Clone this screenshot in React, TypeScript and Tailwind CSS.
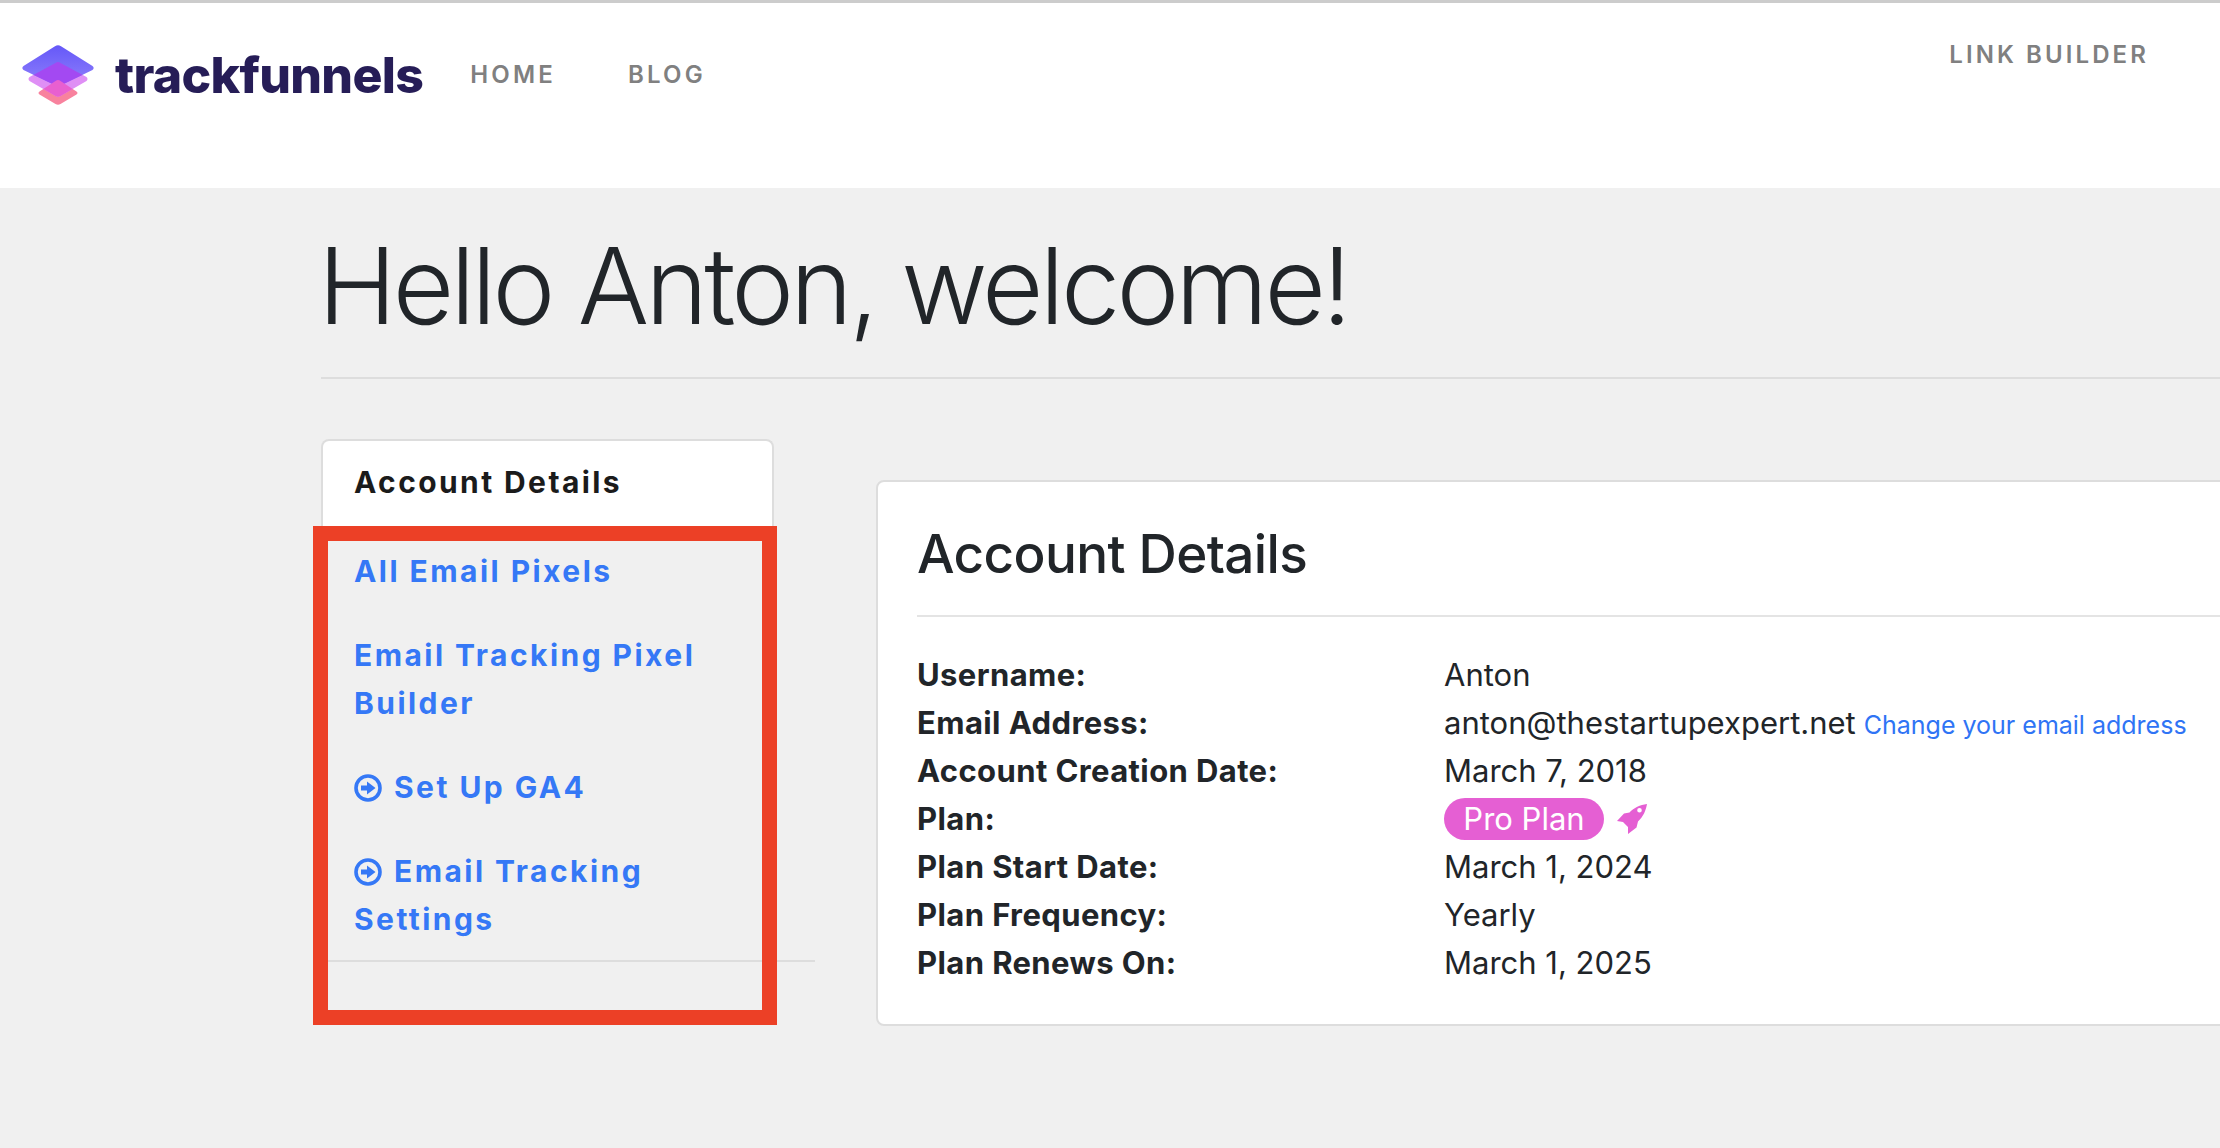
const ROWS: [string, string][] = [
  ['Username:', 'Anton'],
  ['Email Address:', 'anton@thestartupexpert.net'],
  ['Account Creation Date:', 'March 7, 2018'],
  ['Plan:', ''],
  ['Plan Start Date:', 'March 1, 2024'],
  ['Plan Frequency:', 'Yearly'],
  ['Plan Renews On:', 'March 1, 2025'],
]

const TOP = 'M33 1.200 Q36 -0.600 39 1.200 L70.500 21 Q72.800 23 70.500 25 L39 40.300 Q36 41.800 33 40.300 L1.500 25 Q-0.800 23 1.500 21Z'
const MID = 'M33.500 18 Q36 16 38.500 18 L64.500 32 Q66.500 34 64.500 36 L38.500 51 Q36 52.500 33.500 51 L7.500 36 Q5.500 34 7.500 32Z'
const LOW = 'M33.500 36 Q36 34 38.500 36 L54.500 46.500 Q56.500 48 54.500 49.500 L38.500 59 Q36 60.500 33.500 59 L17.500 49.500 Q15.500 48 17.500 46.500Z'

function Logo() {
  return (
    <svg width="72" height="60" viewBox="0 0 72 60" className="shrink-0">
      <defs>
        <linearGradient id="top" x1="0" y1="0" x2="0" y2="1">
          <stop offset="0" stopColor="#6558f8" />
          <stop offset="1" stopColor="#8f80fb" />
        </linearGradient>
        <clipPath id="top-clip">
          <path d={TOP} />
        </clipPath>
        <clipPath id="mid-clip">
          <path d={MID} />
        </clipPath>
      </defs>
      <path d={LOW} fill="#f8829e" />
      <path d={MID} fill="#df8ff5" />
      <path d={TOP} fill="url(#top)" />
      <path d={MID} fill="#a349f2" clipPath="url(#top-clip)" />
      <path d={LOW} fill="#e85fd0" clipPath="url(#mid-clip)" />
    </svg>
  )
}

function ArrowCircle() {
  return (
    <svg viewBox="0 0 28 28" className="inline-block w-[28px] h-[28px] mr-[12px] align-[-4px]">
      <circle cx="14" cy="14" r="12" fill="none" stroke="currentColor" strokeWidth="3.600" />
      <path d="M7 11.500 H13 V7.500 L21.500 14 L13 20.500 V16.500 H7Z" fill="currentColor" />
    </svg>
  )
}

function Rocket() {
  return (
    <svg viewBox="0 0 30 30" className="w-[30px] h-[30px] text-[#e55fd3]">
      <path
        fillRule="evenodd"
        fill="currentColor"
        d="M30 0 C23 1 17 3.500 12.500 8.500 L7 9.500 L0 17 L6 18 L11 23 L11 30 L19.500 23.500 L21 17.500 C26.500 12.500 29 6 30 0Z M22.500 4 A2.300 2.300 0 1 0 22.500 8.600 A2.300 2.300 0 1 0 22.500 4Z"
      />
    </svg>
  )
}

function SideLink({ text, icon }: { text: string; icon?: boolean }) {
  return (
    <a className="block text-[30px] leading-[48px] font-bold tracking-[2.45px] text-[#3578f6]">
      {icon && <ArrowCircle />}
      {text}
    </a>
  )
}

export default function App() {
  return (
    <div className="w-[2220px] h-[1148px] overflow-hidden bg-[#f0f0f0] text-[#212529] font-['Inter',sans-serif]">
      {/* top nav */}
      <header className="h-[188px] bg-white border-t-[3px] border-[#cccccc] flex items-start">
        <div className="flex items-center pl-[22px] pt-[42px]">
          <Logo />
          <span className="ml-[21px] text-[50px] leading-[60px] font-extrabold tracking-[-0.7px] text-[#261d57]">
            trackfunnels
          </span>
        </div>
        <nav className="flex gap-[72px] ml-[47px] mt-[56px] text-[24px] leading-[32px] font-semibold tracking-[3.2px] text-[#808080]">
          <a>HOME</a>
          <a>BLOG</a>
        </nav>
        <a className="ml-auto mr-[71px] mt-[36px] text-[24px] leading-[32px] font-semibold tracking-[3.1px] text-[#808080]">
          LINK BUILDER
        </a>
      </header>

      <main className="pl-[321px]">
        <h1 className="h-[191px] pt-[33px] -indent-[3px] text-[106px] leading-[130px] font-light tracking-[-3.7px] border-b-2 border-[#dddddd]">
          Hello Anton, welcome!
        </h1>

        <div className="flex items-start pt-[60px]">
          {/* sidebar */}
          <aside className="relative w-[494px] shrink-0">
            <div className="w-[453px] h-[87px] bg-white border-2 border-b-0 border-[#dddddd] rounded-t-[8px] pl-[31px] pt-[19px] text-[30px] leading-[44px] font-bold tracking-[2.4px] text-[#1b1b1b]">
              Account Details
            </div>
            <div className="w-[420px] pl-[33px] pt-[21px] flex flex-col gap-[36px]">
              <SideLink text="All Email Pixels" />
              <SideLink text="Email Tracking Pixel Builder" />
              <SideLink icon text="Set Up GA4" />
              <SideLink icon text="Email Tracking Settings" />
            </div>
            <div className="mt-[17px] h-[2px] bg-[#dddddd]" />
            {/* red annotation box */}
            <div className="absolute left-[-8px] top-[87px] w-[464px] h-[499px] border-[15px] border-[#ec4026]" />
          </aside>

          {/* account card */}
          <section className="ml-[61px] mt-[41px] w-[1400px] h-[546px] shrink-0 bg-white border-2 border-[#dddddd] rounded-[8px] pl-[39px] pt-[24px]">
            <h2 className="h-[111px] text-[53px] leading-[96px] font-medium tracking-[-0.6px] border-b-2 border-[#e4e4e4]">
              Account Details
            </h2>
            <div className="grid grid-cols-[527px_1fr] mt-[34px] text-[31px] leading-[48px]">
              {ROWS.map(([label, value]) => (
                <div key={label} className="contents">
                  <div className="font-bold tracking-[0.4px]">{label}</div>
                  {label === 'Plan:' ? (
                    <div className="flex items-center gap-[13px]">
                      <span className="h-[42px] w-[160px] rounded-full bg-[#e55fd3] text-white text-center leading-[42px]">
                        Pro Plan
                      </span>
                      <Rocket />
                    </div>
                  ) : (
                    <div className="h-[48px]">
                      {value}
                      {label === 'Email Address:' && (
                        <a className="ml-[8px] text-[25px] leading-none text-[#2f74f5]">Change your email address</a>
                      )}
                    </div>
                  )}
                </div>
              ))}
            </div>
          </section>
        </div>
      </main>
    </div>
  )
}
